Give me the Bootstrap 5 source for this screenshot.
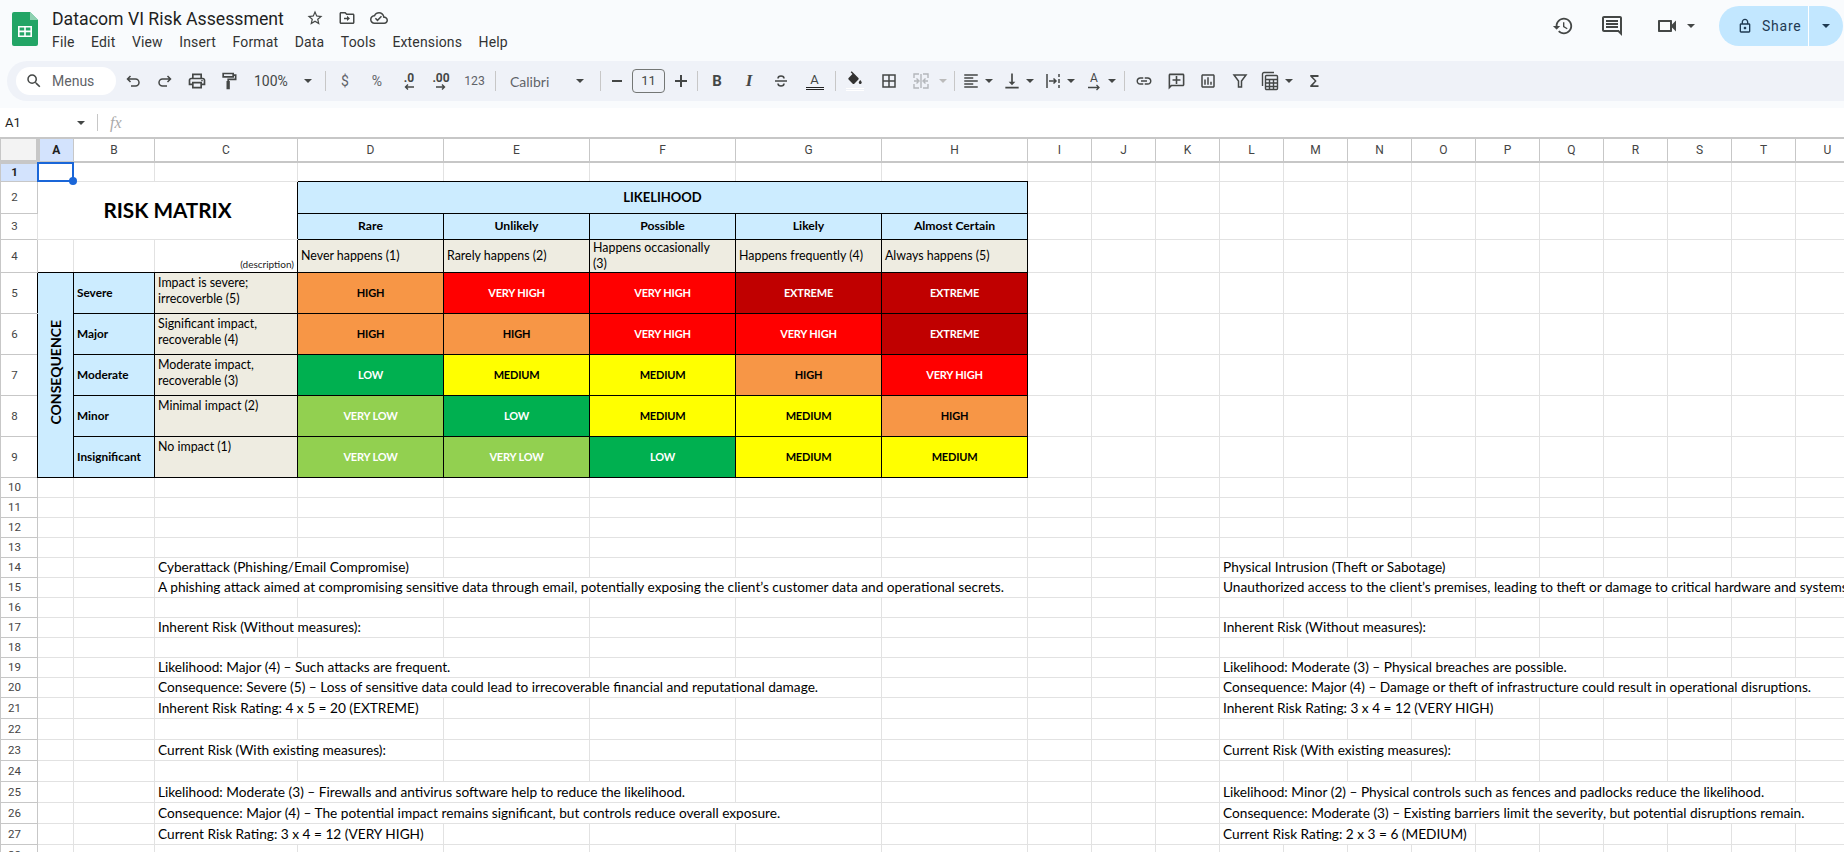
<!DOCTYPE html>
<html lang="en">
<head>
<meta charset="UTF-8">
<title>Datacom VI Risk Assessment</title>
<link href="https://cdn.jsdelivr.net/npm/bootstrap@5.3.2/dist/css/bootstrap.min.css" rel="stylesheet">
<style>
    html, body { height: 852px; overflow: hidden; }
    body { font-family: Roboto, "Liberation Sans", sans-serif; background: #fff; color: #444746; }

    /* top chrome */
    .chrome { background: #f9fbfd; height: 108px; }
    .title-bar { height: 61px; }
    .doc-logo { width: 26px; height: 34px; margin: 12px 14px 0 12px; }
    .doc-title { font-size: 17.7px; line-height: 24px; color: #1f1f1f; margin-top: 7px; }
    .title-icons { margin: 9px 0 0 22px; gap: 14px; }
    .menu-row { font-size: 14px; line-height: 20px; gap: 16.5px; margin-top: 1px; color: #333; letter-spacing: .15px; }
    .right-tools { height: 46px; padding: 6px 1px 0 0; }
    .gap-hist { margin-right: 26px; }
    .gap-cmt { margin-right: 30px; }
    .gap-cam { margin: 0 24px 0 7px; }
    .share-pill { width: 124px; height: 40px; background: #c2e7ff; border-radius: 20px; color: #1f3a52; font-size: 14px; letter-spacing: .75px; }
    .share-main { width: 90px; padding-left: 18px; gap: 9px; border-right: 1px solid #fff; }
    .share-drop { width: 34px; }
    .caret-dn { width: 0; height: 0; border-left: 4px solid transparent; border-right: 4px solid transparent; border-top: 4px solid #444746; }
    .caret-dk { border-top-color: #1f3a52; }
    .caret-off { border-top-color: #bbb; }

    /* toolbar */
    .tool-bar { height: 40px; margin-left: 7px; background: #eff2f8; border-radius: 20px 0 0 20px; font-size: 14px; }
    .menus-pill { width: 100px; height: 28px; margin: 0 1px 0 9px; padding-left: 9px; gap: 9px; background: #fff; border-radius: 14px; color: #5f6368; }
    .tb-i { width: 32px; height: 32px; flex: none; }
    .w-26 { width: 26px; }
    .w-28 { width: 28px; }
    .w-35 { width: 35px; }
    .w-36 { width: 36px; }
    .w-10 { width: 10px; }
    .w-16 { width: 16px; }
    .tb-zoom { width: 77px; padding: 0 10px 0 9px; }
    .tb-font { width: 98px; padding: 0 13px 0 11px; font-family: Lato, sans-serif; color: #5f6368; }
    .tb-size { width: 33px; height: 24px; border: 1px solid #747775; border-radius: 4px; font-size: 13px; margin-left: 2px; }
    .tb-div { width: 1px; height: 20px; margin: 0 3px; background: #c7c7c7; flex: none; }
    .tb-split { margin-left: 5px; }
    .tb-grey { color: #5f6368; }
    .num-fmt { font-size: 12px; font-weight: 700; line-height: 12px; }
    .t-bold { font-weight: 700; font-size: 15px; }
    .t-ital { font-family: "Liberation Serif", serif; font-weight: 700; font-style: italic; font-size: 17px; }
    .t-a { font-size: 13px; line-height: 13px; }
    .a-bar { width: 18px; border-bottom: 3px double #222; height: 4px; }
    .fill-bar { width: 18px; height: 3px; border-top: 1px solid #fff; border-bottom: 1px solid #fff; }

    /* formula bar */
    .formula-bar { height: 29px; font-size: 13px; color: #1f1f1f; }
    .name-box { width: 97px; padding: 0 12px 0 5px; }
    .fx-sep { width: 1px; height: 17px; background: #c7c7c7; }
    .fx-mark { font-family: "Liberation Serif", serif; font-style: italic; font-size: 16px; color: #aaa; margin-left: 12px; }

    /* grid */
    .sheet-wrap { overflow: hidden; }
    .sheet { width: 1859px; table-layout: fixed; font-family: Lato, sans-serif; font-size: 13.68px; line-height: 16px; color: #000; }
    .sheet td, .sheet th { border: 1px solid #e2e2e2; padding: 0 3px; white-space: nowrap; font-weight: 400; overflow: visible; }
    .sheet thead th { height: 24px; border-color: #c7c7c7; border-top-width: 2px; border-bottom-width: 2px; text-align: center; font-family: Roboto, sans-serif; font-size: 12px; color: #444; padding: 0; }
    .sheet tbody th { border-color: #c7c7c7; text-align: center; font-family: Roboto, sans-serif; font-size: 11.5px; color: #444; padding: 0 9px 0 0; }
    .sheet .corner { background: #f3f3f3; border-right: 4px solid #c7c7c7; border-bottom: 4px solid #c7c7c7; }
    .sheet .hd-on { background: #d3e3fd; font-weight: 700; color: #1f1f1f; }
    .rh19 > * { height: 19px; }
    .rh20 > * { height: 20px; }
    .rh21 > * { height: 21px; }
    .rh32 > * { height: 32px; }
    .rh26 > * { height: 26px; }
    .rh33 > * { height: 33px; }
    .rh41 > * { height: 41px; }

    .sel-box { position: absolute; inset: -1px; border: 2px solid #1a66d8; }
    .sel-dot { position: absolute; right: -5px; bottom: -5px; width: 8px; height: 8px; border-radius: 50%; background: #1a66d8; }

    /* with collapsed borders the top/left cell wins, so the matrix edge is set on both sides */
    .sheet td.mx { border-color: #000; }
    .sheet td.edge-b { border-bottom-color: #000; }
    .sheet td.edge-r { border-right-color: #000; }
    .sheet tbody th.edge-r { border-right-color: #000; }
    .sheet td.risk-title { background: #fff; font-size: 20.7px; font-weight: 700; padding: 0; }
    .sheet td.hd-blue { background: #ccecff; font-weight: 700; font-size: 12.2px; }
    .sheet td.hd-big { font-size: 13px; }
    .sheet td.hd-side { font-size: 11.8px; }
    .sheet td.hd-beige { background: #eeece1; font-size: 12.4px; white-space: normal; }
    .sheet td.hd-top { vertical-align: top; padding-top: 2px; }
    .side-lbl { writing-mode: vertical-rl; transform: rotate(180deg); font-weight: 700; font-size: 14px; }
    .sheet td.desc-note { font-size: 10px; line-height: 11px; padding: 0 3px 2px 0; color: #222; }
    .sheet td.rk { font-weight: 700; font-size: 11px; letter-spacing: -.2px; text-align: center; }
    .rk-high { background: #f79646; }
    .rk-vhigh { background: #ff0000; color: #fff; }
    .rk-ext { background: #c00000; color: #fff; }
    .rk-med { background: #ffff00; }
    .rk-low { background: #00b050; color: #fff; }
    .rk-vlow { background: #92d050; color: #fff; }
</style>
</head>
<body>
<div class="chrome">
    <div class="title-bar d-flex">
        <svg class="doc-logo flex-shrink-0" viewBox="0 0 26 34">
            <path fill="#23a566" d="M2 0h16l8 8v24a2 2 0 0 1-2 2H2a2 2 0 0 1-2-2V2a2 2 0 0 1 2-2z"/>
            <path fill="#8ed1b1" d="M18 0l8 8h-8z"/>
            <path fill="#fff" d="M6 14h14v11H6zm1.6 1.6v3h4.6v-3zm6.2 0v3h4.6v-3zm-6.2 4.6v3.2h4.6v-3.2zm6.2 0v3.2h4.6v-3.2z" fill-rule="evenodd"/>
        </svg>
        <div>
            <div class="d-flex">
                <div class="doc-title">Datacom VI Risk Assessment</div>
                <div class="title-icons d-flex">
                    <svg width="18" height="18" viewBox="0 0 24 24" fill="#444746"><path d="M22 9.24l-7.19-.62L12 2 9.19 8.63 2 9.24l5.46 4.73L5.82 21 12 17.27 18.18 21l-1.63-7.03L22 9.24zM12 15.4l-3.76 2.27 1-4.28-3.32-2.88 4.38-.38L12 6.1l1.71 4.04 4.38.38-3.32 2.88 1 4.28L12 15.4z"/></svg>
                    <svg width="18" height="18" viewBox="0 0 24 24" fill="#444746"><path d="M20 6h-8l-2-2H4c-1.1 0-2 .9-2 2v12c0 1.1.9 2 2 2h16c1.1 0 2-.9 2-2V8c0-1.1-.9-2-2-2zm0 12H4V6h5.17l2 2H20v10zm-8-2l4-3.5L12 9v2.500H8v2h4z"/></svg>
                    <svg width="18" height="18" viewBox="0 0 24 24" fill="#444746"><path d="M19.35 10.04C18.67 6.59 15.64 4 12 4 9.11 4 6.6 5.64 5.35 8.04 2.34 8.36 0 10.91 0 14c0 3.31 2.69 6 6 6h13c2.76 0 5-2.24 5-5 0-2.64-2.05-4.78-4.65-4.96zM19 18H6c-2.21 0-4-1.79-4-4 0-2.05 1.53-3.76 3.56-3.97l1.07-.11.5-.95C8.08 7.14 9.94 6 12 6c2.62 0 4.88 1.86 5.39 4.43l.3 1.5 1.53.11c1.56.1 2.78 1.41 2.78 2.96 0 1.65-1.35 3-3 3zm-9-1.500l-3.500-3.500 1.410-1.410L10 13.680l4.600-4.600 1.410 1.410z"/></svg>
                </div>
            </div>
            <div class="menu-row d-flex">
                <span>File</span><span>Edit</span><span>View</span><span>Insert</span><span>Format</span><span>Data</span><span>Tools</span><span>Extensions</span><span>Help</span>
            </div>
        </div>
        <div class="right-tools ms-auto d-flex align-items-center">
            <svg class="gap-hist" width="22" height="22" viewBox="0 0 24 24" fill="#444746"><path d="M13 3c-4.970 0-9 4.030-9 9H1l3.890 3.890.070.140L9 12H6c0-3.870 3.130-7 7-7s7 3.130 7 7-3.130 7-7 7c-1.930 0-3.680-.790-4.940-2.060l-1.420 1.420C8.270 19.990 10.510 21 13 21c4.970 0 9-4.030 9-9s-4.030-9-9-9zm-1 5v5l4.280 2.540.720-1.210-3.500-2.080V8H12z"/></svg>
            <svg class="gap-cmt" width="24" height="24" viewBox="0 0 24 24" fill="#444746"><path d="M21.990 4c0-1.100-.890-2-1.990-2H4c-1.100 0-2 .900-2 2v12c0 1.100.900 2 2 2h14l4 4-.010-18zM20 4v13.170L18.830 16H4V4h16zM6 12h12v2H6zm0-3h12v2H6zm0-3h12v2H6z"/></svg>
            <svg width="26" height="24" viewBox="0 0 24 24" fill="#444746"><path d="M15 8v8H5V8h10m1-2H4c-.550 0-1 .450-1 1v10c0 .550.450 1 1 1h12c.550 0 1-.450 1-1v-3.500l4 4v-11l-4 4V7c0-.550-.450-1-1-1z"/></svg>
            <div class="caret-dn gap-cam"></div>
            <div class="share-pill d-flex">
                <div class="share-main d-flex align-items-center">
                    <svg width="16" height="18" viewBox="0 0 24 24" fill="#1f3a52"><path d="M18 8h-1V6c0-2.760-2.240-5-5-5S7 3.240 7 6v2H6c-1.100 0-2 .900-2 2v10c0 1.100.900 2 2 2h12c1.100 0 2-.900 2-2V10c0-1.100-.900-2-2-2zM9 6c0-1.660 1.340-3 3-3s3 1.340 3 3v2H9V6zm9 14H6V10h12v10zm-6-3c1.100 0 2-.900 2-2s-.900-2-2-2-2 .900-2 2 .900 2 2 2z"/></svg>
                    <span>Share</span>
                </div>
                <div class="share-drop d-flex align-items-center justify-content-center"><div class="caret-dn caret-dk"></div></div>
            </div>
        </div>
    </div>

    <div class="tool-bar d-flex align-items-center">
        <div class="menus-pill d-flex align-items-center">
            <svg width="18" height="18" viewBox="0 0 24 24" fill="#444746"><path d="M15.500 14h-.790l-.280-.270A6.471 6.471 0 0 0 16 9.500 6.500 6.500 0 1 0 9.500 16c1.610 0 3.090-.590 4.230-1.570l.270.280v.790l5 4.990L20.490 19l-4.990-5zm-6 0C7.010 14 5 11.990 5 9.500S7.010 5 9.500 5 14 7.010 14 9.500 11.990 14 9.500 14z"/></svg>
            <span>Menus</span>
        </div>
        <div class="tb-i d-flex align-items-center justify-content-center"><svg width="18" height="18" viewBox="0 0 18 18" fill="none" stroke="#444746" stroke-width="1.500"><path d="M6.500 4 3.500 7l3 3M4 7h7.500a3.500 3.500 0 0 1 0 7H7"/></svg></div>
        <div class="tb-i d-flex align-items-center justify-content-center"><svg width="18" height="18" viewBox="0 0 18 18" fill="none" stroke="#444746" stroke-width="1.500"><path d="M11.500 4l3 3-3 3M14 7H6.500a3.500 3.500 0 0 0 0 7H11"/></svg></div>
        <div class="tb-i d-flex align-items-center justify-content-center"><svg width="20" height="20" viewBox="0 0 24 24" fill="#444746"><path d="M19 8h-1V3H6v5H5c-1.660 0-3 1.340-3 3v6h4v4h12v-4h4v-6c0-1.660-1.340-3-3-3zM8 5h8v3H8V5zm8 12v2H8v-4h8v2zm2-2v-2H6v2H4v-4c0-.550.450-1 1-1h14c.550 0 1 .450 1 1v4h-2z"/><circle cx="18" cy="11.500" r="1"/></svg></div>
        <div class="tb-i d-flex align-items-center justify-content-center"><svg width="20" height="20" viewBox="0 0 24 24" fill="none" stroke="#444746" stroke-width="2"><path d="M5 3h12v4H5zM17 5h3v5h-9v3M10 13h2v8h-2z"/></svg></div>
        <div class="tb-zoom d-flex align-items-center justify-content-between"><span>100%</span><div class="caret-dn"></div></div>
        <div class="tb-div"></div>
        <div class="tb-i tb-grey d-flex align-items-center justify-content-center">$</div>
        <div class="tb-i tb-grey d-flex align-items-center justify-content-center">%</div>
        <div class="tb-i d-flex flex-column align-items-center justify-content-center num-fmt"><span>.0</span><svg width="12" height="6" viewBox="0 0 12 6"><path d="M11 3H3M5 .500 2.500 3 5 5.500" fill="none" stroke="#444746" stroke-width="1.400"/></svg></div>
        <div class="tb-i d-flex flex-column align-items-center justify-content-center num-fmt"><span>.00</span><svg width="12" height="6" viewBox="0 0 12 6"><path d="M1 3h8M7 .500 9.500 3 7 5.500" fill="none" stroke="#444746" stroke-width="1.400"/></svg></div>
        <div class="tb-i w-35 tb-grey d-flex align-items-center justify-content-center small">123</div>
        <div class="tb-div"></div>
        <div class="tb-font d-flex align-items-center justify-content-between"><span>Calibri</span><div class="caret-dn"></div></div>
        <div class="tb-div"></div>
        <div class="tb-i w-26 d-flex align-items-center justify-content-center"><svg width="10" height="2"><path d="M0 1h10" stroke="#444746" stroke-width="2"/></svg></div>
        <div class="tb-size d-flex align-items-center justify-content-center">11</div>
        <div class="tb-i d-flex align-items-center justify-content-center"><svg width="12" height="12"><path d="M0 6h12M6 0v12" stroke="#444746" stroke-width="2"/></svg></div>
        <div class="tb-div ms-0"></div>
        <div class="tb-i d-flex align-items-center justify-content-center t-bold">B</div>
        <div class="tb-i d-flex align-items-center justify-content-center t-ital">I</div>
        <div class="tb-i d-flex align-items-center justify-content-center"><svg width="18" height="18" viewBox="0 0 18 18" fill="none" stroke="#444746" stroke-width="1.500"><path d="M12 6.500C12 4.800 10.600 4 9 4S6 4.800 6 6.500M3 9h12M12 11.500C12 13.200 10.600 14 9 14s-3-.800-3-2.500"/></svg></div>
        <div class="tb-i w-35 d-flex flex-column align-items-center justify-content-center t-a"><span>A</span><div class="a-bar"></div></div>
        <div class="tb-div"></div>
        <div class="tb-i d-flex flex-column align-items-center justify-content-center"><svg width="18" height="17" viewBox="0 0 24 22" fill="#333"><path d="M16.560 8.940 7.620 0 6.210 1.410l2.380 2.380-5.150 5.150c-.590.590-.590 1.540 0 2.120l5.500 5.500c.290.290.680.440 1.060.440s.770-.150 1.060-.440l5.500-5.500c.590-.580.590-1.530 0-2.120zM19 11.500s-2 2.170-2 3.500c0 1.100.900 2 2 2s2-.900 2-2c0-1.330-2-3.500-2-3.500z"/></svg><div class="fill-bar"></div></div>
        <div class="tb-i w-36 d-flex align-items-center justify-content-center"><svg width="18" height="18" viewBox="0 0 24 24" fill="#444746"><path d="M3 3v18h18V3H3zm8 16H5v-6h6v6zm0-8H5V5h6v6zm8 8h-6v-6h6v6zm0-8h-6V5h6v6z"/></svg></div>
        <div class="tb-i w-28 d-flex align-items-center justify-content-center"><svg width="18" height="18" viewBox="0 0 18 18" fill="none" stroke="#b4b7bb" stroke-width="1.400"><path d="M7 2H2v4M2 12v4h5M11 2h5v4M16 12v4h-5M2 9h4M4.500 6.500 7 9l-2.500 2.500M16 9h-4M13.500 6.500 11 9l2.500 2.500M9 2v14"/></svg></div>
        <div class="tb-i w-16 d-flex align-items-center justify-content-center"><div class="caret-dn caret-off"></div></div>
        <div class="tb-div"></div>

        <div class="d-flex align-items-center"><div class="tb-i w-26 d-flex align-items-center justify-content-center"><svg width="18" height="18" viewBox="0 0 24 24" fill="#444746"><path d="M15 15H3v2h12v-2zm0-8H3v2h12V7zM3 13h18v-2H3v2zm0 8h18v-2H3v2zM3 3v2h18V3H3z"/></svg></div><div class="w-10 d-flex justify-content-center"><div class="caret-dn"></div></div></div>
        <div class="tb-split d-flex align-items-center"><div class="tb-i w-26 d-flex align-items-center justify-content-center"><svg width="20" height="20" viewBox="0 0 24 24" fill="#444746"><path d="M16 13h-3V3h-2v10H8l4 4 4-4zM4 19v2h16v-2H4z"/></svg></div><div class="w-10 d-flex justify-content-center"><div class="caret-dn"></div></div></div>
        <div class="tb-split d-flex align-items-center"><div class="tb-i w-26 d-flex align-items-center justify-content-center"><svg width="18" height="18" viewBox="0 0 18 18" fill="none" stroke="#444746" stroke-width="1.500"><path d="M3 2v14M15 2v3M15 7v4M15 13v3M5 9h7M9.500 6.500 12 9l-2.500 2.500"/></svg></div><div class="w-10 d-flex justify-content-center"><div class="caret-dn"></div></div></div>
        <div class="tb-split me-1 d-flex align-items-center"><div class="tb-i w-26 d-flex flex-column align-items-center justify-content-center num-fmt fw-normal"><span>A</span><svg width="14" height="7" viewBox="0 0 14 7"><path d="M1 3.500h11M9.500 1 12 3.500 9.500 6" fill="none" stroke="#444746" stroke-width="1.300"/></svg></div><div class="w-10 d-flex justify-content-center"><div class="caret-dn"></div></div></div>
        <div class="tb-div"></div>

        <div class="tb-i d-flex align-items-center justify-content-center"><svg width="18" height="18" viewBox="0 0 24 24" fill="#444746"><path d="M3.900 12c0-1.710 1.390-3.100 3.100-3.100h4V7H7c-2.760 0-5 2.240-5 5s2.240 5 5 5h4v-1.900H7c-1.710 0-3.100-1.390-3.100-3.100zM8 13h8v-2H8v2zm9-6h-4v1.900h4c1.710 0 3.100 1.390 3.100 3.100s-1.390 3.100-3.100 3.100h-4V17h4c2.760 0 5-2.240 5-5s-2.240-5-5-5z"/></svg></div>
        <div class="tb-i d-flex align-items-center justify-content-center"><svg width="19" height="19" viewBox="0 0 24 24" fill="#444746"><path d="M4 4h16v12H5.170L4 17.170V4m0-2c-1.100 0-2 .900-2 2v18l4-4h14c1.100 0 2-.900 2-2V4c0-1.100-.900-2-2-2H4zm9 3h-2v4H7v2h4v4h2v-4h4V9h-4V5z"/></svg></div>
        <div class="tb-i d-flex align-items-center justify-content-center"><svg width="18" height="18" viewBox="0 0 24 24" fill="#444746"><path d="M9 17H7v-7h2v7zm4 0h-2V7h2v10zm4 0h-2v-4h2v4zm2 2H5V5h14v14zm0-16H5c-1.100 0-2 .900-2 2v14c0 1.100.900 2 2 2h14c1.100 0 2-.900 2-2V5c0-1.100-.900-2-2-2z"/></svg></div>
        <div class="tb-i d-flex align-items-center justify-content-center"><svg width="18" height="18" viewBox="0 0 18 18" fill="none" stroke="#444746" stroke-width="1.500"><path d="M3 3h12l-4.500 6v6h-3V9z"/></svg></div>
        <div class="tb-i w-28 d-flex align-items-center justify-content-center"><svg width="18" height="20" viewBox="0 0 18 20" fill="none" stroke="#444746" stroke-width="1.400"><path d="M1.500 15V3a1.500 1.500 0 0 1 1.500-1.500h10"/><rect x="4.500" y="4.500" width="12" height="14" rx="1"/><path d="M4.500 8.500h12M4.500 12h12M4.500 15.500h12M8.500 8.500v10M12.500 8.500v10"/></svg></div>
        <div class="w-10 d-flex justify-content-center"><div class="caret-dn"></div></div>
        <div class="tb-i ms-1 d-flex align-items-center justify-content-center"><svg width="18" height="18" viewBox="0 0 24 24" fill="#444746"><path d="M18 4H7v2l6 6-6 6v2h11v-2.500h-7.500L15.500 12l-5-5.500H18z"/></svg></div>
    </div>
</div>

<div class="formula-bar d-flex align-items-center">
    <div class="name-box d-flex align-items-center justify-content-between"><span>A1</span><div class="caret-dn"></div></div>
    <div class="fx-sep"></div>
    <div class="fx-mark">fx</div>
</div>

<div class="sheet-wrap">
<table class="sheet" id="grid">
    <colgroup id="cols"></colgroup>
    <thead>
        <tr id="head"></tr>
    </thead>
    <tbody id="rows">
        <tr class="rh19" data-fill><th class="hd-on">1</th><td class="position-relative"><div class="sel-box"><div class="sel-dot"></div></div></td><td></td><td></td><td class="edge-b"></td><td class="edge-b"></td><td class="edge-b"></td><td class="edge-b"></td><td class="edge-b"></td></tr>
        <tr class="rh32" data-fill><th>2</th><td colspan="3" rowspan="2" class="risk-title edge-r text-center align-middle">RISK MATRIX</td><td colspan="5" class="mx hd-blue hd-big text-center align-middle">LIKELIHOOD</td></tr>
        <tr class="rh26" data-fill><th>3</th><td class="mx hd-blue text-center align-middle">Rare</td><td class="mx hd-blue text-center align-middle">Unlikely</td><td class="mx hd-blue text-center align-middle">Possible</td><td class="mx hd-blue text-center align-middle">Likely</td><td class="mx hd-blue text-center align-middle">Almost Certain</td></tr>
        <tr class="rh33" data-fill><th>4</th><td class="edge-b"></td><td class="edge-b"></td><td class="desc-note edge-b edge-r text-end align-bottom">(description)</td>
            <td class="mx hd-beige align-middle">Never happens (1)</td><td class="mx hd-beige align-middle">Rarely happens (2)</td><td class="mx hd-beige align-middle">Happens occasionally<br>(3)</td><td class="mx hd-beige align-middle">Happens frequently (4)</td><td class="mx hd-beige align-middle">Always happens (5)</td></tr>
        <tr class="rh41" data-fill><th class="edge-r">5</th><td rowspan="5" class="mx hd-blue text-center align-middle p-0"><span class="side-lbl d-inline-block">CONSEQUENCE</span></td>
            <td class="mx hd-blue hd-side align-middle">Severe</td><td class="mx hd-beige hd-top">Impact is severe; irrecoverble (5)</td>
            <td class="mx rk rk-high align-middle">HIGH</td><td class="mx rk rk-vhigh align-middle">VERY HIGH</td><td class="mx rk rk-vhigh align-middle">VERY HIGH</td><td class="mx rk rk-ext align-middle">EXTREME</td><td class="mx rk rk-ext align-middle">EXTREME</td></tr>
        <tr class="rh41" data-fill><th class="edge-r">6</th><td class="mx hd-blue hd-side align-middle">Major</td><td class="mx hd-beige hd-top">Significant impact, recoverable (4)</td>
            <td class="mx rk rk-high align-middle">HIGH</td><td class="mx rk rk-high align-middle">HIGH</td><td class="mx rk rk-vhigh align-middle">VERY HIGH</td><td class="mx rk rk-vhigh align-middle">VERY HIGH</td><td class="mx rk rk-ext align-middle">EXTREME</td></tr>
        <tr class="rh41" data-fill><th class="edge-r">7</th><td class="mx hd-blue hd-side align-middle">Moderate</td><td class="mx hd-beige hd-top">Moderate impact, recoverable (3)</td>
            <td class="mx rk rk-low align-middle">LOW</td><td class="mx rk rk-med align-middle">MEDIUM</td><td class="mx rk rk-med align-middle">MEDIUM</td><td class="mx rk rk-high align-middle">HIGH</td><td class="mx rk rk-vhigh align-middle">VERY HIGH</td></tr>
        <tr class="rh41" data-fill><th class="edge-r">8</th><td class="mx hd-blue hd-side align-middle">Minor</td><td class="mx hd-beige hd-top">Minimal impact (2)</td>
            <td class="mx rk rk-vlow align-middle">VERY LOW</td><td class="mx rk rk-low align-middle">LOW</td><td class="mx rk rk-med align-middle">MEDIUM</td><td class="mx rk rk-med align-middle">MEDIUM</td><td class="mx rk rk-high align-middle">HIGH</td></tr>
        <tr class="rh41" data-fill><th class="edge-r">9</th><td class="mx hd-blue hd-side align-middle">Insignificant</td><td class="mx hd-beige hd-top">No impact (1)</td>
            <td class="mx rk rk-vlow align-middle">VERY LOW</td><td class="mx rk rk-vlow align-middle">VERY LOW</td><td class="mx rk rk-low align-middle">LOW</td><td class="mx rk rk-med align-middle">MEDIUM</td><td class="mx rk rk-med align-middle">MEDIUM</td></tr>
    </tbody>
</table>
</div>

<script src="https://cdn.jsdelivr.net/npm/bootstrap@5.3.2/dist/js/bootstrap.bundle.min.js"></script>
<script>
    const letters = 'ABCDEFGHIJKLMNOPQRSTU'.split('');
    const widths = [36, 81, 143, 146, 146, 146, 146, 146].concat(Array(13).fill(64));

    // column sizes and header labels
    document.getElementById('cols').innerHTML = '<col style="width:37px">' + widths.map(w => `<col style="width:${w}px">`).join('');
    document.getElementById('head').innerHTML = '<th class="corner"></th>' + letters.map(l => `<th class="${l === 'A' ? 'hd-on' : ''}">${l}</th>`).join('');

    // columns I to U of the matrix rows are empty
    document.querySelectorAll('tr[data-fill]').forEach(tr => {
        tr.insertAdjacentHTML('beforeend', '<td></td>'.repeat(13));
    });

    // [left text, left span, right text, right span] spans count the columns the text runs over
    const notes = {
        14: ['Cyberattack (Phishing/Email Compromise)', 2, 'Physical Intrusion (Theft or Sabotage)', 4],
        15: ['A phishing attack aimed at compromising sensitive data through email, potentially exposing the client’s customer data and operational secrets.', 6, 'Unauthorized access to the client’s premises, leading to theft or damage to critical hardware and systems.', 10],
        17: ['Inherent Risk (Without measures):', 2, 'Inherent Risk (Without measures):', 4],
        19: ['Likelihood: Major (4) – Such attacks are frequent.', 3, 'Likelihood: Moderate (3) – Physical breaches are possible.', 6],
        20: ['Consequence: Severe (5) – Loss of sensitive data could lead to irrecoverable financial and reputational damage.', 5, 'Consequence: Major (4) – Damage or theft of infrastructure could result in operational disruptions.', 10],
        21: ['Inherent Risk Rating: 4 x 5 = 20 (EXTREME)', 2, 'Inherent Risk Rating: 3 x 4 = 12 (VERY HIGH)', 5],
        23: ['Current Risk (With existing measures):', 2, 'Current Risk (With existing measures):', 4],
        25: ['Likelihood: Moderate (3) – Firewalls and antivirus software help to reduce the likelihood.', 4, 'Likelihood: Minor (2) – Physical controls such as fences and padlocks reduce the likelihood.', 9],
        26: ['Consequence: Major (4) – The potential impact remains significant, but controls reduce overall exposure.', 5, 'Consequence: Moderate (3) – Existing barriers limit the severity, but potential disruptions remain.', 10],
        27: ['Current Risk Rating: 3 x 4 = 12 (VERY HIGH)', 2, 'Current Risk Rating: 2 x 3 = 6 (MEDIUM)', 4]
    };

    function block(text, span, total) {
        if (!text) return '<td></td>'.repeat(total);
        return `<td colspan="${span}" class="align-middle overflow-hidden">${text}</td>` + '<td></td>'.repeat(total - span);
    }

    let html = '';
    for (let n = 10; n <= 28; n++) {
        const note = notes[n] || [];
        html += `<tr class="${n > 20 ? 'rh21' : 'rh20'}"><th>${n}</th><td></td><td></td>`
            + block(note[0], note[1], 9) + block(note[2], note[3], 10) + '</tr>';
    }
    document.getElementById('rows').insertAdjacentHTML('beforeend', html);
</script>
</body>
</html>
